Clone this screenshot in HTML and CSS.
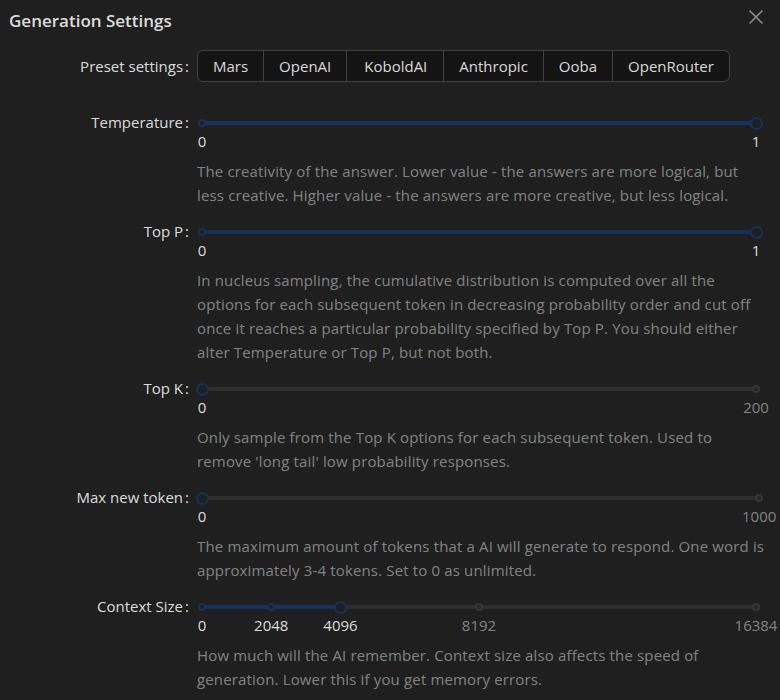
FILE: index.html
```html
<!DOCTYPE html>
<html lang="en">
<head>
<meta charset="utf-8">
<title>Generation Settings</title>
<link rel="stylesheet" href="styles.css">
</head>
<body>
<div class="modal">
  <div class="header">
    <h1 class="title">Generation Settings</h1>
    <button class="close" aria-label="Close">
      <svg width="14" height="14" viewBox="0 0 14 14"><path d="M1 1 L13 13 M13 1 L1 13" stroke="#8c8c8c" stroke-width="1.6" fill="none" stroke-linecap="round"/></svg>
    </button>
  </div>
  <div class="form">
    <div class="row preset">
      <label class="label">Preset settings</label>
      <div class="control">
        <div class="seg">
          <button class="seg-btn">Mars</button><button class="seg-btn">OpenAI</button><button class="seg-btn wide">KoboldAI</button><button class="seg-btn">Anthropic</button><button class="seg-btn">Ooba</button><button class="seg-btn">OpenRouter</button>
        </div>
      </div>
    </div>

    <div class="row">
      <label class="label">Temperature</label>
      <div class="control">
        <div class="slider">
          <div class="rail"></div>
          <div class="track" style="width:100%"></div>
          <span class="dot active" style="left:0%"></span>
          <span class="dot active" style="left:100%"></span>
          <span class="handle" style="left:100%"></span>
        </div>
        <div class="marks"><span class="mark active" style="left:0%">0</span><span class="mark active" style="left:100%">1</span></div>
        <p class="desc">The creativity of the answer. Lower value - the answers are more logical, but<br>less creative. Higher value - the answers are more creative, but less logical.</p>
      </div>
    </div>

    <div class="row">
      <label class="label">Top P</label>
      <div class="control">
        <div class="slider">
          <div class="rail"></div>
          <div class="track" style="width:100%"></div>
          <span class="dot active" style="left:0%"></span>
          <span class="dot active" style="left:100%"></span>
          <span class="handle" style="left:100%"></span>
        </div>
        <div class="marks"><span class="mark active" style="left:0%">0</span><span class="mark active" style="left:100%">1</span></div>
        <p class="desc">In nucleus sampling, the cumulative distribution is computed over all the<br>options for each subsequent token in decreasing probability order and cut off<br>once it reaches a particular probability specified by Top P. You should either<br>alter Temperature or Top P, but not both.</p>
      </div>
    </div>

    <div class="row">
      <label class="label">Top K</label>
      <div class="control">
        <div class="slider">
          <div class="rail"></div>
          <span class="dot active" style="left:0%"></span>
          <span class="dot" style="left:100%"></span>
          <span class="handle" style="left:0%"></span>
        </div>
        <div class="marks"><span class="mark active" style="left:0%">0</span><span class="mark" style="left:100%">200</span></div>
        <p class="desc">Only sample from the Top K options for each subsequent token. Used to<br>remove 'long tail' low probability responses.</p>
      </div>
    </div>

    <div class="row">
      <label class="label">Max new token</label>
      <div class="control">
        <div class="slider">
          <div class="rail"></div>
          <span class="dot active" style="left:0%"></span>
          <span class="dot" style="left:100%"></span>
          <span class="handle" style="left:0%"></span>
        </div>
        <div class="marks"><span class="mark active" style="left:0%">0</span><span class="mark" style="left:100%">1000</span></div>
        <p class="desc">The maximum amount of tokens that a AI will generate to respond. One word is<br>approximately 3-4 tokens. Set to 0 as unlimited.</p>
      </div>
    </div>

    <div class="row">
      <label class="label">Context Size</label>
      <div class="control">
        <div class="slider">
          <div class="rail"></div>
          <div class="track" style="width:25%"></div>
          <span class="dot active" style="left:0%"></span>
          <span class="dot active" style="left:12.5%"></span>
          <span class="dot" style="left:50%"></span>
          <span class="dot" style="left:100%"></span>
          <span class="handle" style="left:25%"></span>
        </div>
        <div class="marks"><span class="mark active" style="left:0%">0</span><span class="mark active" style="left:12.5%">2048</span><span class="mark active" style="left:25%">4096</span><span class="mark" style="left:50%">8192</span><span class="mark" style="left:100%">16384</span></div>
        <p class="desc">How much will the AI remember. Context size also affects the speed of<br>generation. Lower this if you get memory errors.</p>
      </div>
    </div>
  </div>
</div>
</body>
</html>
```

FILE: styles.css
```css
* { box-sizing: border-box; }
html, body {
  margin: 0;
  padding: 0;
  background: #1f1f1f;
}
body {
  font-family: "Open Sans", "Noto Sans", sans-serif;
  font-size: 15px;
  color: rgba(255, 255, 255, 0.85);
  width: 780px;
  height: 700px;
  overflow: hidden;
}
.modal {
  padding: 10px 0 0 0;
}
.header {
  display: flex;
  align-items: center;
  justify-content: space-between;
  height: 22px;
  padding: 0 17px 0 9px;
}
.title {
  margin: 0;
  font-size: 17px;
  line-height: 22px;
  font-weight: 600;
  color: rgba(255, 255, 255, 0.85);
}
.close {
  background: none;
  border: 0;
  padding: 0;
  width: 14px;
  height: 14px;
  display: flex;
  margin-top: -8px;
}
.form {
  margin-top: 18px;
  display: flex;
  flex-direction: column;
  gap: 14px;
}
.row {
  display: grid;
  grid-template-columns: 197px 1fr;
  align-items: start;
}
.row.preset {
  margin-bottom: 17px;
}
.label {
  text-align: right;
  line-height: 18px;
  white-space: nowrap;
  color: rgba(255, 255, 255, 0.85);
}
.label::after {
  content: ":";
  margin-left: 2px;
  margin-right: 8px;
}
.preset .label {
  line-height: 32px;
}
.control {
  padding-right: 19px;
}
.seg {
  display: inline-flex;
  height: 32px;
}
.seg-btn {
  font: inherit;
  color: rgba(255, 255, 255, 0.85);
  background: #141414;
  border: 1px solid #424242;
  height: 32px;
  padding: 0 15px;
  margin-left: -1px;
  line-height: 30px;
}
.seg-btn.wide {
  padding: 0 16px 0 17px;
}
.seg-btn:first-child {
  margin-left: 0;
  border-radius: 6px 0 0 6px;
}
.seg-btn:last-child {
  border-radius: 0 6px 6px 0;
}
.slider {
  position: relative;
  height: 20px;
  margin: 0 5px;
}
.rail, .track {
  position: absolute;
  left: 0;
  top: 8px;
  height: 4px;
  border-radius: 2px;
}
.rail {
  width: 100%;
  background: #2e2e2e;
}
.track {
  background: #15325b;
}
.dot {
  position: absolute;
  top: 6px;
  width: 8px;
  height: 8px;
  margin-left: -4px;
  border-radius: 50%;
  border: 2px solid #363636;
  background: #262626;
}
.dot.active {
  border-color: #15325b;
  background: #1f1f1f;
}
.handle {
  position: absolute;
  top: 3.5px;
  width: 13px;
  height: 13px;
  margin-left: -6.5px;
  border-radius: 50%;
  border: 2.5px solid #15325b;
  background: #1f1f1f;
}
.marks {
  position: relative;
  height: 18px;
  margin: 0 5px;
}
.mark {
  position: absolute;
  top: -1px;
  line-height: 18px;
  transform: translateX(-50%);
  white-space: nowrap;
  color: rgba(255, 255, 255, 0.45);
}
.mark.active {
  color: rgba(255, 255, 255, 0.85);
}
.desc {
  margin: 8px 0 1px 0;
  line-height: 24px;
  letter-spacing: 0.15px;
  color: rgba(255, 255, 255, 0.45);
  white-space: nowrap;
}
```
